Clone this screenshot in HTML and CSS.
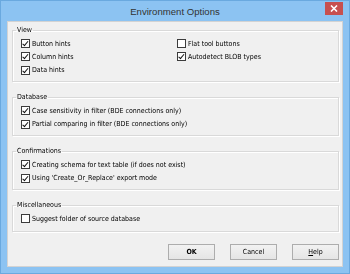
FILE: index.html
```html
<!DOCTYPE html>
<html>
<head>
<meta charset="utf-8">
<link rel="stylesheet" href="styles.css">
</head>
<body>
<div class="window">
  <div class="titlebar">
    <span class="spacer"></span>
    <span class="title">Environment Options</span>
    <span class="close"><svg width="8" height="7" viewBox="0 0 8 7"><path d="M1 0.5 L7 6.5 M7 0.5 L1 6.5" stroke="#fff" stroke-width="1.6"/></svg></span>
  </div>
  <div class="client">
    <fieldset class="group view">
      <legend>View</legend>
      <div class="cols">
        <div class="col">
          <div class="row"><span class="cb on"></span>Button hints</div>
          <div class="row"><span class="cb on"></span>Column hints</div>
          <div class="row"><span class="cb on"></span>Data hints</div>
        </div>
        <div class="col">
          <div class="row"><span class="cb"></span>Flat tool buttons</div>
          <div class="row"><span class="cb on"></span>Autodetect BLOB types</div>
        </div>
      </div>
    </fieldset>
    <fieldset class="group">
      <legend>Database</legend>
      <div class="row"><span class="cb on"></span>Case sensitivity in filter (BDE connections only)</div>
      <div class="row"><span class="cb on"></span>Partial comparing in filter (BDE connections only)</div>
    </fieldset>
    <fieldset class="group">
      <legend>Confirmations</legend>
      <div class="row"><span class="cb on"></span>Creating schema for text table (if does not exist)</div>
      <div class="row"><span class="cb on"></span>Using 'Create_Or_Replace' export mode</div>
    </fieldset>
    <fieldset class="group misc">
      <legend>Miscellaneous</legend>
      <div class="row"><span class="cb"></span>Suggest folder of source database</div>
    </fieldset>
    <div class="buttons">
      <button class="btn default">OK</button>
      <button class="btn">Cancel</button>
      <button class="btn"><u>H</u>elp</button>
    </div>
  </div>
</div>
</body>
</html>
```
FILE: styles.css
```css
html, body {
  margin: 0;
  padding: 0;
  background: #fff;
}
.window {
  width: 350px;
  height: 274px;
  box-sizing: border-box;
  background: #8cc3f2;
  border: 1px solid #6aa9df;
  display: flex;
  flex-direction: column;
  padding: 0 6px 6px 6px;
  font-family: "DejaVu Sans Condensed", "DejaVu Sans", sans-serif;
}
.titlebar {
  height: 20px;
  display: grid;
  grid-template-columns: 1fr auto 1fr;
  align-items: start;
}
.title {
  font-family: "Liberation Sans", Arial, sans-serif;
  font-size: 9.6px;
  color: #333;
  line-height: 20px;
  padding-top: 1px;
}
.close {
  justify-self: end;
  width: 18px;
  height: 13px;
  margin-top: 1px;
  background: #c7504f;
  display: flex;
  align-items: center;
  justify-content: center;
}
.client {
  flex: 1;
  background: #f0f0f0;
  border: 1px solid #b9d7f2;
  display: flex;
  flex-direction: column;
  padding: 4px 3px 0 4px;
  font-size: 7px;
  color: #000;
  filter: grayscale(1);
}
.group {
  margin: 0 0 11px 0;
  border: 1px solid #d9d9d9;
  box-shadow: inset 1px 1px 0 #fff, 1px 1px 0 #fff;
  padding: 2px 8px 4px 8px;
  min-width: 0;
}
.group.misc {
  padding-bottom: 5.5px;
}
.group legend {
  padding: 0 1px;
  margin-left: -5px;
  line-height: 9px;
  color: #000;
}
.cols {
  display: grid;
  grid-template-columns: 156px 1fr;
}
.row {
  display: flex;
  align-items: center;
  gap: 2px;
  height: 13.5px;
  white-space: nowrap;
  color: #000;
}
.view .row {
  height: 13.25px;
}
.cb {
  width: 9px;
  height: 9px;
  box-sizing: border-box;
  border: 1px solid #3c3c3c;
  background: #fff;
  flex: none;
  position: relative;
}
.cb.on::after {
  content: "";
  position: absolute;
  left: 2.2px;
  top: 0px;
  width: 2px;
  height: 4.5px;
  border: solid #111;
  border-width: 0 1.5px 1.5px 0;
  transform: rotate(40deg);
}
.buttons {
  display: flex;
  justify-content: flex-end;
  gap: 15px;
  margin-top: 1px;
}
.btn {
  width: 47px;
  height: 16px;
  box-sizing: border-box;
  border: 1px solid #adadad;
  background: linear-gradient(#f2f2f2, #e5e5e5);
  font-family: "DejaVu Sans Condensed", "DejaVu Sans", sans-serif;
  font-size: 7px;
  color: #000;
  padding: 0;
}
.btn.default {
  font-weight: bold;
}
```
